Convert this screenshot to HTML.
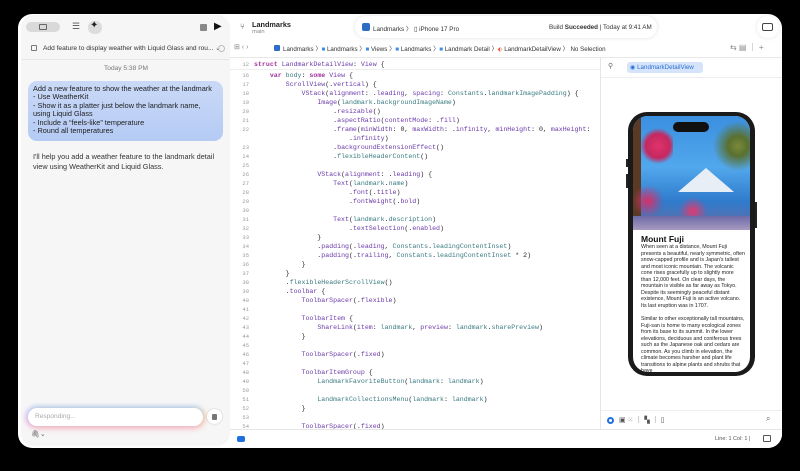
<!DOCTYPE html>
<html><head><meta charset="utf-8"><style>
*{margin:0;padding:0;box-sizing:border-box}
body{width:800px;height:471px;background:#000;position:relative;overflow:hidden;font-family:"Liberation Sans",sans-serif;color:#222}
.win{position:absolute;left:18px;top:14px;width:764px;height:434px;background:#fff;border-radius:14px;overflow:hidden}
.side{position:absolute;left:4px;top:2px;width:207px;height:429px;background:#f6f6f6;border-radius:12px;box-shadow:0 0 2px rgba(0,0,0,.12)}
.abs{position:absolute}
.t{position:absolute;white-space:nowrap}
.code{position:absolute;left:0;top:0;font-family:"Liberation Mono",monospace;font-size:6.6px;color:#262626}
.row{position:absolute;left:0;height:9px;line-height:9px;white-space:pre}
.ln{position:absolute;left:214px;width:17px;text-align:right;color:#9a9a9a;font-size:5.5px}
.cd{position:absolute;left:236px}
.k{color:#a4359f;font-weight:bold}.p{color:#6b3aa9}.c{color:#3a7b82}
</style></head><body>
<div class="win">
 <div class="side">
  <div class="abs" style="left:4px;top:6px;width:34px;height:10px;background:#d9d9d9;border-radius:5px"></div>
  <div class="abs" style="left:17px;top:8px;width:8px;height:6px;border:1px solid #666;border-radius:1px"></div>
  <div class="t" style="left:50px;top:5px;font-size:9px;color:#555">☰</div>
  <div class="abs" style="left:66px;top:5px;width:14px;height:13px;background:#ddd;border-radius:6px"></div>
  <div class="t" style="left:68px;top:4px;font-size:10px;color:#222">✦</div>
  <div class="abs" style="left:178px;top:8px;width:7px;height:7px;background:#888;border-radius:1px"></div>
  <div class="t" style="left:192px;top:5px;font-size:10px;color:#111">▶</div>
  <div class="abs" style="left:9px;top:29px;width:6px;height:6px;border:1px solid #777;border-radius:1px"></div>
  <div class="t" style="left:21px;top:28px;font-size:6.6px;color:#333">Add feature to display weather with Liquid Glass and rou... ⌄</div>
  <div class="abs" style="left:196px;top:29px;width:7px;height:7px;border:1px solid #bbb;border-radius:50%"></div>
  <div class="abs" style="left:0;top:43px;width:207px;height:1px;background:#e6e6e6"></div>
  <div class="t" style="left:82px;top:49px;font-size:6.6px;color:#777">Today 5:38 PM</div>
  <div class="abs" style="left:6px;top:65px;width:195px;height:60px;border-radius:9px;background:linear-gradient(#cad9f7,#b5cbf4)"></div>
  <div class="t" style="left:11px;top:69px;font-size:7.3px;line-height:8.4px;color:#1d1d1d">Add a new feature to show the weather at the landmark<br>- Use WeatherKit<br>- Show it as a platter just below the landmark name,<br>using Liquid Glass<br>- Include a “feels-like” temperature<br>- Round all temperatures</div>
  <div class="t" style="left:11px;top:136px;font-size:7.3px;line-height:9.5px;color:#333">I'll help you add a weather feature to the landmark detail<br>view using WeatherKit and Liquid Glass.</div>
  <div class="abs" style="left:6px;top:392px;width:175px;height:18px;border-radius:9px;background:#fff;box-shadow:0 -2px 5px rgba(120,200,255,.5),0 3px 6px rgba(255,140,160,.45),3px 0 5px rgba(255,200,120,.5),-3px 0 5px rgba(210,150,255,.4)"></div>
  <div class="t" style="left:13px;top:397px;font-size:6.6px;color:#aaa">Responding...</div>
  <div class="abs" style="left:185px;top:393px;width:15px;height:15px;border-radius:50%;background:#fff;box-shadow:0 0 2px rgba(0,0,0,.2)"></div>
  <div class="abs" style="left:190px;top:398px;width:5px;height:6px;background:#777;border-radius:1px"></div>
  <div class="t" style="left:9px;top:414px;font-size:7px;color:#666">🖇︎⌄</div>
 </div>
 <!-- top toolbar -->
 <div class="t" style="left:222px;top:8px;font-size:8px;color:#555">⑂</div>
 <div class="t" style="left:234px;top:6px;font-size:7.3px;font-weight:bold;color:#222">Landmarks</div>
 <div class="t" style="left:234px;top:15px;font-size:5.8px;color:#888">main</div>
 <div class="abs" style="left:337px;top:2px;width:302px;height:22px;background:#fff;border-radius:11px;box-shadow:0 0 5px rgba(0,0,0,.12)"></div>
 <div class="abs" style="left:344px;top:9px;width:8px;height:8px;background:#2d6ec4;border-radius:2px"></div>
 <div class="t" style="left:355px;top:10px;font-size:6.3px;color:#333">Landmarks 〉 ▯ iPhone 17 Pro</div>
 <div class="t" style="left:531px;top:10px;font-size:6.3px;color:#333">Build <b>Succeeded</b> | Today at 9:41 AM</div>
 <div class="abs" style="left:739px;top:2px;width:22px;height:22px;background:#fff;border-radius:11px;box-shadow:0 0 5px rgba(0,0,0,.1)"></div>
 <div class="abs" style="left:744px;top:9px;width:11px;height:8px;border:1px solid #444;border-radius:2px"></div>
 <!-- breadcrumb -->
 <div class="t" style="left:216px;top:29px;font-size:7px;color:#888">⊞ ‹ ›</div>
 <div class="abs" style="left:256px;top:31px;width:6px;height:6px;background:#2d6ec4;border-radius:1px"></div>
 <div class="t" style="left:265px;top:30px;font-size:6.2px;color:#333">Landmarks 〉<span style="color:#3a8de0">■</span> Landmarks 〉<span style="color:#3a8de0">■</span> Views 〉<span style="color:#3a8de0">■</span> Landmarks 〉<span style="color:#3a8de0">■</span> Landmark Detail 〉<span style="color:#e6532c">⬖</span> LandmarkDetailView 〉 No Selection</div>
 <div class="t" style="left:712px;top:28px;font-size:8px;color:#888">⇆ ▤ ｜ +</div>
 <div class="abs" style="left:212px;top:43px;width:552px;height:1px;background:#e8e8e8"></div>
 <!-- code -->
 <div class="abs" style="left:212px;top:55px;width:370px;height:1px;background:#eee"></div>
 <div class="code">
  <div class="row" style="top:45.5px"><span class="ln">12</span><span class="cd" style="left:236px"><span class="k">struct</span> <span class="p">LandmarkDetailView</span>: <span class="p">View</span> {</span></div>
 </div>
 <div class="code" style="top:56.5px">
<div class="row" style="top:0px"><span class="ln">16</span><span class="cd">    <span class="k">var</span> <span class="c">body</span>: <span class="k">some</span> <span class="p">View</span> {</span></div>
<div class="row" style="top:9px"><span class="ln">17</span><span class="cd">        <span class="p">ScrollView</span>(.<span class="p">vertical</span>) {</span></div>
<div class="row" style="top:18px"><span class="ln">18</span><span class="cd">            <span class="p">VStack</span>(<span class="p">alignment</span>: .<span class="p">leading</span>, <span class="p">spacing</span>: <span class="c">Constants</span>.<span class="c">landmarkImagePadding</span>) {</span></div>
<div class="row" style="top:27px"><span class="ln">19</span><span class="cd">                <span class="p">Image</span>(<span class="c">landmark</span>.<span class="c">backgroundImageName</span>)</span></div>
<div class="row" style="top:36px"><span class="ln">20</span><span class="cd">                    .<span class="p">resizable</span>()</span></div>
<div class="row" style="top:45px"><span class="ln">21</span><span class="cd">                    .<span class="p">aspectRatio</span>(<span class="p">contentMode</span>: .<span class="p">fill</span>)</span></div>
<div class="row" style="top:54px"><span class="ln">22</span><span class="cd">                    .<span class="p">frame</span>(<span class="p">minWidth</span>: 0, <span class="p">maxWidth</span>: .<span class="p">infinity</span>, <span class="p">minHeight</span>: 0, <span class="p">maxHeight</span>:</span></div>
<div class="row" style="top:63px"><span class="cd">                        .<span class="p">infinity</span>)</span></div>
<div class="row" style="top:72px"><span class="ln">23</span><span class="cd">                    .<span class="p">backgroundExtensionEffect</span>()</span></div>
<div class="row" style="top:81px"><span class="ln">24</span><span class="cd">                    .<span class="c">flexibleHeaderContent</span>()</span></div>
<div class="row" style="top:90px"><span class="ln">25</span></div>
<div class="row" style="top:99px"><span class="ln">26</span><span class="cd">                <span class="p">VStack</span>(<span class="p">alignment</span>: .<span class="p">leading</span>) {</span></div>
<div class="row" style="top:108px"><span class="ln">27</span><span class="cd">                    <span class="p">Text</span>(<span class="c">landmark</span>.<span class="c">name</span>)</span></div>
<div class="row" style="top:117px"><span class="ln">28</span><span class="cd">                        .<span class="p">font</span>(.<span class="p">title</span>)</span></div>
<div class="row" style="top:126px"><span class="ln">29</span><span class="cd">                        .<span class="p">fontWeight</span>(.<span class="p">bold</span>)</span></div>
<div class="row" style="top:135px"><span class="ln">30</span></div>
<div class="row" style="top:144px"><span class="ln">31</span><span class="cd">                    <span class="p">Text</span>(<span class="c">landmark</span>.<span class="c">description</span>)</span></div>
<div class="row" style="top:153px"><span class="ln">32</span><span class="cd">                        .<span class="p">textSelection</span>(.<span class="p">enabled</span>)</span></div>
<div class="row" style="top:162px"><span class="ln">33</span><span class="cd">                }</span></div>
<div class="row" style="top:171px"><span class="ln">34</span><span class="cd">                .<span class="p">padding</span>(.<span class="p">leading</span>, <span class="c">Constants</span>.<span class="c">leadingContentInset</span>)</span></div>
<div class="row" style="top:180px"><span class="ln">35</span><span class="cd">                .<span class="p">padding</span>(.<span class="p">trailing</span>, <span class="c">Constants</span>.<span class="c">leadingContentInset</span> * 2)</span></div>
<div class="row" style="top:189px"><span class="ln">36</span><span class="cd">            }</span></div>
<div class="row" style="top:198px"><span class="ln">37</span><span class="cd">        }</span></div>
<div class="row" style="top:207px"><span class="ln">38</span><span class="cd">        .<span class="c">flexibleHeaderScrollView</span>()</span></div>
<div class="row" style="top:216px"><span class="ln">39</span><span class="cd">        .<span class="p">toolbar</span> {</span></div>
<div class="row" style="top:225px"><span class="ln">40</span><span class="cd">            <span class="p">ToolbarSpacer</span>(.<span class="p">flexible</span>)</span></div>
<div class="row" style="top:234px"><span class="ln">41</span></div>
<div class="row" style="top:243px"><span class="ln">42</span><span class="cd">            <span class="p">ToolbarItem</span> {</span></div>
<div class="row" style="top:252px"><span class="ln">43</span><span class="cd">                <span class="p">ShareLink</span>(<span class="p">item</span>: <span class="c">landmark</span>, <span class="p">preview</span>: <span class="c">landmark</span>.<span class="c">sharePreview</span>)</span></div>
<div class="row" style="top:261px"><span class="ln">44</span><span class="cd">            }</span></div>
<div class="row" style="top:270px"><span class="ln">45</span></div>
<div class="row" style="top:279px"><span class="ln">46</span><span class="cd">            <span class="p">ToolbarSpacer</span>(.<span class="p">fixed</span>)</span></div>
<div class="row" style="top:288px"><span class="ln">47</span></div>
<div class="row" style="top:297px"><span class="ln">48</span><span class="cd">            <span class="p">ToolbarItemGroup</span> {</span></div>
<div class="row" style="top:306px"><span class="ln">49</span><span class="cd">                <span class="c">LandmarkFavoriteButton</span>(<span class="c">landmark</span>: <span class="c">landmark</span>)</span></div>
<div class="row" style="top:315px"><span class="ln">50</span></div>
<div class="row" style="top:324px"><span class="ln">51</span><span class="cd">                <span class="c">LandmarkCollectionsMenu</span>(<span class="c">landmark</span>: <span class="c">landmark</span>)</span></div>
<div class="row" style="top:333px"><span class="ln">52</span><span class="cd">            }</span></div>
<div class="row" style="top:342px"><span class="ln">53</span></div>
<div class="row" style="top:351px"><span class="ln">54</span><span class="cd">            <span class="p">ToolbarSpacer</span>(.<span class="p">fixed</span>)</span></div>
 </div>
 <!-- status bar -->
 <div class="abs" style="left:212px;top:415px;width:552px;height:19px;background:#fff;border-top:1px solid #e6e6e6"></div>
 <div class="abs" style="left:219px;top:422px;width:8px;height:6px;background:#1f6fe0;border-radius:2px"></div>
 <div class="t" style="left:697px;top:422px;font-size:5.5px;color:#555">Line: 1  Col: 1  |</div>
 <div class="abs" style="left:745px;top:421px;width:8px;height:7px;border:1px solid #555;border-radius:1px"></div>
 <!-- preview -->
 <div class="abs" style="left:582px;top:44px;width:1px;height:371px;background:#e6e6e6"></div>
 <div class="t" style="left:590px;top:48px;font-size:7px;color:#666">⚲</div>
 <div class="abs" style="left:609px;top:48px;width:76px;height:11px;background:#d5e4fb;border-radius:3px"></div>
 <div class="t" style="left:612px;top:50px;font-size:6.2px;color:#2b6fd4">◉ LandmarkDetailView</div>
 <div class="abs" style="left:583px;top:63px;width:181px;height:1px;background:#eee"></div>
 <div class="abs" style="left:583px;top:396px;width:181px;height:1px;background:#eee"></div>
 <div class="abs" style="left:589px;top:403px;width:7px;height:7px;border-radius:50%;background:#1f6fe0;border:2px solid #1f6fe0"></div>
 <div class="abs" style="left:591px;top:405px;width:3px;height:3px;border-radius:50%;background:#fff"></div>
 <div class="t" style="left:601px;top:401px;font-size:7px;color:#555">▣ ⁙ ｜ ▚ ｜ ▯</div>
 <div class="t" style="left:748px;top:400px;font-size:8px;color:#666">⌕</div>
 <!-- phone -->
 <div class="abs" style="left:610px;top:98px;width:127px;height:264px;background:#1a1a1a;border-radius:19px"></div>
 <div class="abs" style="left:608px;top:145px;width:2px;height:8px;background:#222"></div>
 <div class="abs" style="left:608px;top:160px;width:2px;height:14px;background:#222"></div>
 <div class="abs" style="left:737px;top:188px;width:2px;height:26px;background:#222"></div>
 <div class="abs" style="left:615px;top:102px;width:117px;height:256px;background:#fff;border-radius:15px;overflow:hidden">
  <div class="abs" style="left:0;top:0;width:117px;height:114px;background:linear-gradient(#3a8fe0 0%,#52a8ec 45%,#2f7bcc 75%,#6a6aa0 100%)"></div>
  <div class="abs" style="left:45px;top:52px;width:0;height:0;border-left:28px solid transparent;border-right:28px solid transparent;border-bottom:24px solid #e8eef6"></div>
  <div class="abs" style="left:0;top:0;width:40px;height:114px;background:radial-gradient(circle at 25px 30px,#e0336a 0,#c42860 12px,transparent 18px),radial-gradient(circle at 15px 85px,#d83068 0,transparent 16px),linear-gradient(90deg,#5a3a25 0 8px,transparent 8px)"></div>
  <div class="abs" style="left:40px;top:70px;width:40px;height:40px;background:radial-gradient(circle at 20px 25px,#e03a70 0,transparent 14px)"></div>
  <div class="abs" style="left:80px;top:0;width:37px;height:100px;background:radial-gradient(circle at 25px 30px,#7a8a3a 0,#5a7030 10px,transparent 25px)"></div>
  <div class="abs" style="left:0;top:100px;width:117px;height:14px;background:linear-gradient(#6c6aa8,#a89ac0)"></div>
  <div class="abs" style="left:40px;top:6px;width:36px;height:10px;background:#111;border-radius:5px"></div>
  <div class="t" style="left:8px;top:118px;font-size:8.5px;font-weight:bold;color:#111">Mount Fuji</div>
  <div class="t" style="left:8px;top:128px;font-size:5.3px;line-height:6.55px;color:#222;white-space:normal;width:104px">When seen at a distance, Mount Fuji presents a beautiful, nearly symmetric, often snow-capped profile and is Japan's tallest and most iconic mountain. The volcanic cone rises gracefully up to slightly more than 12,000 feet. On clear days, the mountain is visible as far away as Tokyo. Despite its seemingly peaceful distant existence, Mount Fuji is an active volcano. Its last eruption was in 1707.<br><br>Similar to other exceptionally tall mountains, Fuji-san is home to many ecological zones from its base to its summit. In the lower elevations, deciduous and coniferous trees such as the Japanese oak and cedars are common. As you climb in elevation, the climate becomes harsher and plant life transitions to alpine plants and shrubs that have</div>
 </div>
</div>
</body></html>
